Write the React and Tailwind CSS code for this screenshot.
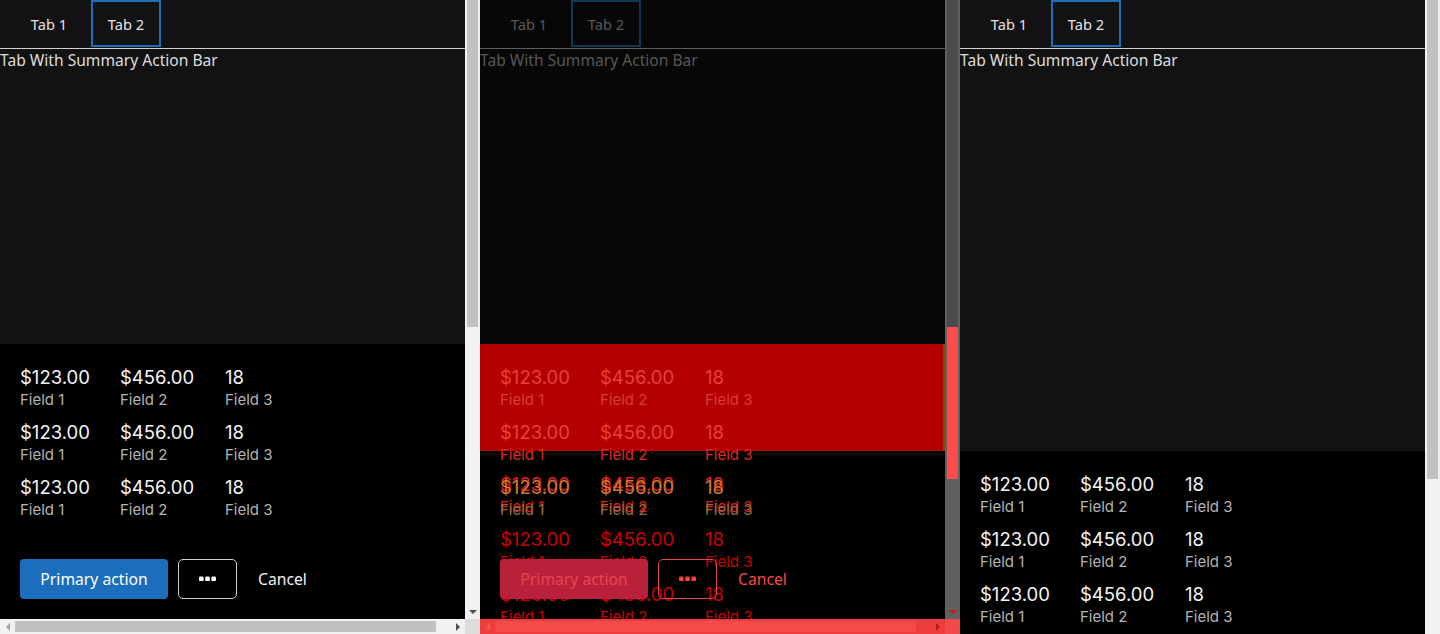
import React from 'react';

const COLS = [
  ['$123.00', 'Field 1', 'w-[100px]'],
  ['$456.00', 'Field 2', 'w-[105px]'],
  ['18', 'Field 3', 'w-[80px]'],
];

function Dots({ color }) {
  return (
    <svg width="17" height="6" viewBox="0 0 17 6" fill={color}>
      <rect x="0" y="0.5" width="4.6" height="4.6" rx="1.2" />
      <rect x="6.2" y="0.5" width="4.6" height="4.6" rx="1.2" />
      <rect x="12.4" y="0.5" width="4.6" height="4.6" rx="1.2" />
    </svg>
  );
}

function TabBar({ dim }) {
  const text = dim ? 'text-[#5a5a5a]' : 'text-[#e2e2e2]';
  return (
    <div
      className={`h-[49px] shrink-0 flex items-start pl-[14px] gap-[7px] border-b ${
        dim ? 'border-[#5e5e5e]' : 'border-[#d2d2d2]'
      }`}
    >
      <div className={`w-[70px] h-[47px] pt-[2px] flex items-center justify-center text-[14.6px] ${text}`}>Tab 1</div>
      <div
        className={`w-[70px] h-[47px] pt-[2px] flex items-center justify-center text-[14.6px] border-2 ${
          dim ? 'border-[#0e3759]' : 'border-[#1f6db6]'
        } ${text}`}
      >
        Tab 2
      </div>
    </div>
  );
}

function Title({ dim, h }) {
  return (
    <div
      className={`${h} shrink-0 text-[15.6px] leading-[22px] whitespace-nowrap ${
        dim ? 'text-[#585858]' : 'text-[#dedede]'
      }`}
    >
      Tab With Summary Action Bar
    </div>
  );
}

function SummaryRow({ valueCls, labelCls }) {
  return (
    <div className="flex h-[44px] font-['Inter',sans-serif]">
      {COLS.map(([v, l, w]) => (
        <div key={l} className={`${w} flex flex-col`}>
          <span className={`text-[18.5px] leading-[22px] whitespace-nowrap ${valueCls}`}>{v}</span>
          <span className={`text-[15px] leading-[24px] whitespace-nowrap ${labelCls}`}>{l}</span>
        </div>
      ))}
    </div>
  );
}

function Buttons({ diff }) {
  return (
    <div className="flex items-center mt-[39px] h-[40px]">
      <button
        className={`w-[148px] h-[40px] pt-[1px] rounded-[4px] text-[15.7px] ${
          diff ? 'bg-[#b9203a] text-[#e9464f]' : 'bg-[#1a6ebc] text-white'
        }`}
      >
        Primary action
      </button>
      <button
        className={`ml-[10px] w-[59px] h-[40px] rounded-[5px] border flex items-center justify-center ${
          diff ? 'border-[#e24545]' : 'border-[#d0d0d0]'
        }`}
      >
        <Dots color={diff ? '#ff3d3d' : '#ffffff'} />
      </button>
      <button className={`ml-[21px] pt-[1px] text-[15.7px] ${diff ? 'text-[#ff4646]' : 'text-[#f2f2f2]'}`}>Cancel</button>
    </div>
  );
}

function DownArrow({ color }) {
  return (
    <svg width="8" height="4" viewBox="0 0 8 4">
      <path d="M0 0 L8 0 L4 4 Z" fill={color} />
    </svg>
  );
}
function LeftArrow({ color }) {
  return (
    <svg width="4" height="8" viewBox="0 0 4 8">
      <path d="M4 0 L4 8 L0 4 Z" fill={color} />
    </svg>
  );
}
function RightArrow({ color }) {
  return (
    <svg width="4" height="8" viewBox="0 0 4 8">
      <path d="M0 0 L0 8 L4 4 Z" fill={color} />
    </svg>
  );
}

function NormalRows() {
  return (
    <div className="flex flex-col gap-[11px]">
      <SummaryRow valueCls="text-[#f4f4f4]" labelCls="text-[#b4b4b4]" />
      <SummaryRow valueCls="text-[#f4f4f4]" labelCls="text-[#b4b4b4]" />
      <SummaryRow valueCls="text-[#f4f4f4]" labelCls="text-[#b4b4b4]" />
    </div>
  );
}

function Panel1() {
  return (
    <div className="w-[480px] h-[634px] flex flex-col shrink-0">
      <div className="flex h-[619px]">
        <div className="w-[465px] bg-[#121212] flex flex-col overflow-hidden">
          <TabBar />
          <Title h="h-[295px]" />
          <div className="flex-1 bg-black pl-[20px] pt-[22px]">
            <NormalRows />
            <Buttons />
          </div>
        </div>
        <div className="w-[15px] bg-[#f1f1f1] flex flex-col">
          <div className="h-[327px] mx-[2px] bg-[#c1c1c1]" />
          <div className="flex-1" />
          <div className="h-[15px] flex items-center justify-center">
            <DownArrow color="#505050" />
          </div>
        </div>
      </div>
      <div className="h-[15px] flex">
        <div className="w-[465px] bg-[#f1f1f1] flex items-center">
          <div className="w-[15px] flex justify-center">
            <LeftArrow color="#a3a3a3" />
          </div>
          <div className="w-[421px] h-[11px] bg-[#c1c1c1]" />
          <div className="flex-1" />
          <div className="w-[15px] flex justify-center">
            <RightArrow color="#505050" />
          </div>
        </div>
        <div className="w-[15px] bg-[#dcdcdc]" />
      </div>
    </div>
  );
}

function Panel2() {
  return (
    <div className="w-[480px] h-[634px] flex flex-col shrink-0">
      <div className="flex h-[619px]">
        <div className="w-[465px] bg-[#070707] flex flex-col overflow-hidden">
          <TabBar dim />
          <Title dim h="h-[295px]" />
          <div className="flex-1 bg-black relative">
            <div className="absolute left-0 right-0 top-0 h-[107px] bg-[#b30000]" />
            <div className="absolute right-0 top-0 w-[2px] h-[107px] bg-[#7d4a0c]" />
            <div className="absolute left-[20px] top-[129px] flex flex-col gap-[11px]">
              <SummaryRow valueCls="text-[#e21d1d]" labelCls="text-[#e21d1d]" />
              <SummaryRow valueCls="text-[#cc0000]" labelCls="text-[#cc0000]" />
              <SummaryRow valueCls="text-[#cc0000]" labelCls="text-[#cc0000]" />
            </div>
            <div className="relative pl-[20px] pt-[22px]">
              <div className="flex flex-col gap-[11px]">
                <SummaryRow valueCls="text-[#e8403c]" labelCls="text-[#d93c3c]" />
                <SummaryRow valueCls="text-[#e8403c]" labelCls="text-[#e02828]" />
                <SummaryRow valueCls="text-[#c87a30]" labelCls="text-[#9a6a3a]" />
              </div>
              <Buttons diff />
            </div>
          </div>
        </div>
        <div className="w-[15px] bg-[#606060] flex flex-col">
          <div className="h-[327px] mx-[2px] bg-[#4a4a4a]" />
          <div className="h-[152px] mx-[2px] bg-[#ff4b4b]" />
          <div className="flex-1" />
          <div className="h-[15px] flex items-center justify-center">
            <DownArrow color="#d21313" />
          </div>
        </div>
      </div>
      <div className="h-[15px] flex">
        <div className="w-[465px] bg-[#ef3d3d] flex items-center">
          <div className="w-[15px] flex justify-center">
            <LeftArrow color="#e06060" />
          </div>
          <div className="w-[421px] h-[11px] bg-[#f64a4a]" />
          <div className="flex-1" />
          <div className="w-[15px] flex justify-center">
            <RightArrow color="#b51a1a" />
          </div>
        </div>
        <div className="w-[15px] bg-[#f04a4a]" />
      </div>
    </div>
  );
}

function Panel3() {
  return (
    <div className="w-[480px] h-[634px] flex shrink-0">
      <div className="w-[465px] bg-[#121212] flex flex-col overflow-hidden">
        <TabBar />
        <Title h="h-[402px]" />
        <div className="flex-1 bg-black pl-[20px] pt-[22px]">
          <NormalRows />
          <Buttons />
        </div>
      </div>
      <div className="w-[15px] bg-[#f1f1f1]">
        <div className="h-[479px] mx-[2px] bg-[#c1c1c1]" />
      </div>
    </div>
  );
}

export default function App() {
  return (
    <div className="w-[1440px] h-[634px] flex bg-white overflow-hidden font-['Noto_Sans',sans-serif]">
      <Panel1 />
      <Panel2 />
      <Panel3 />
    </div>
  );
}
